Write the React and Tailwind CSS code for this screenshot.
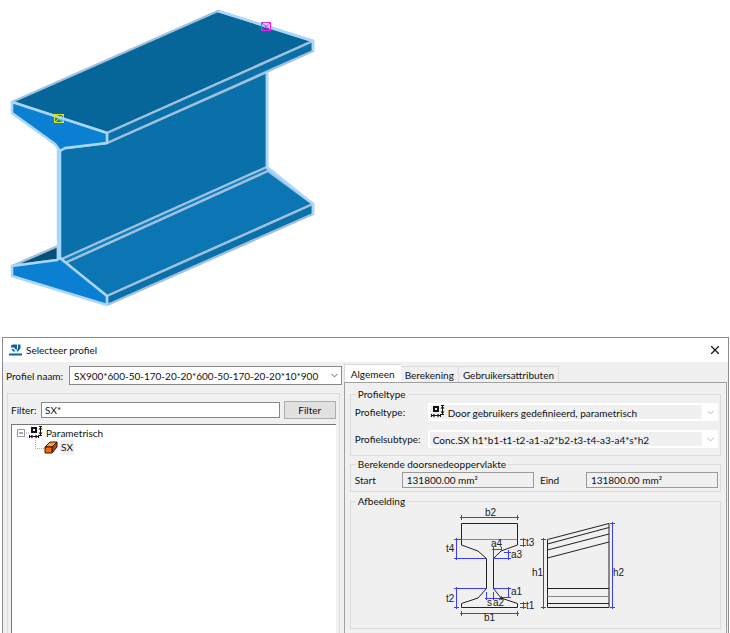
import { useState } from "react";
import { ChevronDown, X } from "lucide-react";

const tabs = ["Algemeen", "Berekening", "Gebruikersattributen"];

const BeamView = () => (
  <svg className="block shrink-0" width="330" height="337" viewBox="0 0 330 337" strokeLinejoin="round">
    <g stroke="#a0c0dc" strokeWidth="2.4">
      <path d="M12 266L58 246V260Z" fill="#07507a" />
      <path d="M59 149L107 143L267 72V167L62 259H59Z" fill="#0a70aa" />
      <path d="M62 259L267 167L268 171L65 263Z" fill="#0b80c4" strokeWidth="2" />
      <path d="M65 263L268 171L313 204L107 296Z" fill="#0b76b3" />
      <path d="M107 296L313 204V214L107 305Z" fill="#0a70aa" />
      <path d="M12 102L218 11L313 41L107 133Z" fill="#066699" />
      <path d="M107 133L313 41V51L107 143Z" fill="#0a70aa" />
    </g>
    <g stroke="#a8d6fc" strokeWidth="2.6" fill="none">
      <path d="M218 11L313 41V51M267 72V167L313 204V214" />
      <path d="M12 102L107 133V143L65 148L60 151L55 144L12 113Z" fill="#0b80d2" />
      <path d="M12 266L57 260L60 258L107 296V305L12 276Z" fill="#0b80d2" />
      <path d="M59 149V259" strokeWidth="4.500" />
    </g>
    <path d="M54.500 114.500h9v8h-9zl9 8m0-8l-9 8" fill="none" stroke="#dbe81e" />
    <path d="M261.500 22.500h9v8h-9zl9 8m0-8l-9 8" fill="none" stroke="#f01ef0" />
  </svg>
);

const ParametricIcon = () => (
  <svg className="shrink-0" width="14" height="13" viewBox="0 0 14 13" fill="none" stroke="#111">
    <path d="M3 2h4v4H3z" strokeWidth="2" />
    <path d="M11.500 1v8M10 .5h3M10 9.500h3" />
    <path d="M1 10.500h8M.5 9v3M9.500 9v3" />
    <path d="M9.500 3.500h4l-2-2.500zM9.500 6.500h4l-2 2.500zM3.500 8.500v4L1 10.500zM6.500 8.500v4L9 10.500z" fill="#111" stroke="none" />
  </svg>
);

const ProfileDiagram = () => (
  <svg className="mx-auto block" width="190" height="118" viewBox="441 507 190 118" fill="none">
    <g stroke="#222">
      <path d="M461.500 523.500H517.500V545L501 551L493.500 558.500V588.500L501 598L517.500 603.500V607.500H461.500V603.500L478 598L486.500 588.500V558.500L478 551L461.500 545Z" />
      <path d="M547.500 539.500L609 523.500V607.500H547.500ZM547.500 544L609 527.500M547.500 550L609 534M547.500 558L609 542M547.500 588.500H609M547.500 603.500H609" />
      <path d="M461.500 539.500H517.500M547.500 596.500H609" stroke="#888" />
    </g>
    <g stroke="#3c3cff">
      <path d="M460 517.500H519M461.500 515V520M517.500 515V520" />
      <path d="M460 613.500H519M461.500 611V616M517.500 611V616" />
      <path d="M456.500 538V560M454 539.500H461M454 558.500H486" />
      <path d="M456.500 587V609M454 588.500H486M454 607.500H459" />
      <path d="M523.500 538V547M520 539.500H526M520 545.500H526" />
      <path d="M523.500 602V609M520 603.500H526M520 607.500H526" />
      <path d="M493.500 547V558M492 549.500H502M501.500 547V551" />
      <path d="M508.500 550V560M504 552.500H511M494 558.500H511" />
      <path d="M508.500 587V598M494 588.500H511M501 597.500H511" />
      <path d="M486.500 592V600M493.500 592V600M485 598.500H502M501.500 596V600" />
      <path d="M543.500 538V609M541 539.500H546M541 607.500H546" />
      <path d="M612.500 522V609M610 523.500H615M610 607.500H615" />
    </g>
    <g fill="#222" className="font-['Liberation_Sans',sans-serif] text-[10px]">
      <text x="485" y="516">b2</text>
      <text x="484" y="621">b1</text>
      <text x="446" y="552">t4</text>
      <text x="446" y="602">t2</text>
      <text x="526" y="546">t3</text>
      <text x="526" y="609">t1</text>
      <text x="491" y="547">a4</text>
      <text x="511" y="558">a3</text>
      <text x="511" y="595">a1</text>
      <text x="487" y="606">s</text>
      <text x="493" y="606">a2</text>
      <text x="532" y="576">h1</text>
      <text x="613" y="576">h2</text>
    </g>
  </svg>
);

const TypeSelect = ({ id, value, icon }) => (
  <div className="relative min-w-0 flex-1">
    <select
      id={id}
      className={`block h-[18px] w-full appearance-none border-2 border-r-[16px] border-white bg-[#f0f0f0] ${icon ? "pl-[18px]" : "pl-[3px]"}`}
    >
      <option>{value}</option>
    </select>
    {icon && <span className="pointer-events-none absolute top-[2px] left-[3px]">{icon}</span>}
    <ChevronDown className="pointer-events-none absolute top-[4px] right-[2px] text-[#b0b0b0]" size={11} strokeWidth={2} />
  </div>
);

const Group = ({ title, className, children }) => (
  <fieldset className={`min-w-0 border border-[#dcdcdc] pr-[2px] pl-1 ${className}`}>
    <legend className="ml-[1px] px-[2px] leading-3">{title}</legend>
    {children}
  </fieldset>
);

const App = () => {
  const [filter, setFilter] = useState("SX*");
  const [activeTab, setActiveTab] = useState("Algemeen");

  return (
    <div className="flex min-h-screen flex-col bg-white font-[Lato,'Noto_Sans',sans-serif] text-[10px] leading-4 whitespace-nowrap text-[#111]">
      <BeamView />
      <section className="mr-[1px] ml-[2px] flex flex-1 flex-col border border-b-0 border-[#8c8c8c] bg-[#f0f0f0]">
        <header className="flex h-6 items-center bg-white px-[6px]">
          <svg width="14" height="14" viewBox="0 0 14 14" fill="#0a63a5">
            <path d="M0 10.500h13v2H0zM2 2.500l2-1h4v5H6.500L5 4.500H2zM9 1.500h2.500v4L9 8.500H7.500L9 5z" />
            <path d="M2.500 6h2l2 2.500H4z" />
          </svg>
          <h1 className="ml-[3px] flex-1">Selecteer profiel</h1>
          <button aria-label="Sluiten">
            <X size={14} strokeWidth={2} />
          </button>
        </header>

        <div className="grid flex-1 grid-cols-[47fr_53fr]">
          <div className="flex min-w-0 flex-col pt-1 pr-[2px] pl-[3px]">
            <div className="flex items-center">
              <label htmlFor="name" className="w-[63px] shrink-0">Profiel naam:</label>
              <div className="relative flex-1">
                <select id="name" className="block h-[19px] w-full appearance-none border border-[#888] bg-white pl-1">
                  <option>SX900*600-50-170-20-20*600-50-170-20-20*10*900</option>
                </select>
                <ChevronDown className="pointer-events-none absolute top-[4px] right-[2px] text-[#555]" size={11} strokeWidth={2} />
              </div>
            </div>
            <div className="mt-2 mr-[2px] ml-[1px] flex flex-1 flex-col border border-b-0 border-[#dcdcdc] px-[3px] pt-[7px]">
              <div className="flex items-center gap-1">
                <label htmlFor="filter" className="w-[26px] shrink-0">Filter:</label>
                <input
                  id="filter"
                  className="h-4 min-w-0 flex-1 border border-[#888] bg-white px-[3px]"
                  value={filter}
                  onChange={(e) => setFilter(e.target.value)}
                />
                <button className="h-[18px] w-[52px] border border-[#adadad] bg-[#e1e1e1] leading-4">Filter</button>
              </div>
              <ul className="mt-[5px] flex-1 border-t border-l border-[#777] bg-white pl-[5px]">
                <li className="flex h-[15px] items-center">
                  <svg width="12" height="9" viewBox="0 0 12 9" fill="none">
                    <path d="M.5 1.500h7v7h-7z" stroke="#999" />
                    <path d="M2 5h4" stroke="#3355aa" />
                    <path d="M9 5h4" stroke="#aaa" strokeDasharray="1 1" />
                  </svg>
                  <ParametricIcon />
                  <span className="ml-[3px]">Parametrisch</span>
                </li>
                <li className="flex h-[15px] items-center pl-[18px]">
                  <svg width="9" height="15" viewBox="0 0 9 15" fill="none">
                    <path d="M.5 0v8.500H9" stroke="#aaa" strokeDasharray="1 1" />
                  </svg>
                  <svg width="14" height="13" viewBox="0 0 14 13" stroke="#331a00" strokeLinejoin="round">
                    <path d="M1 6L6 1H13L8 6Z" fill="#ff9a4d" />
                    <path d="M8 6L13 1V6L8 12Z" fill="#a84a10" />
                    <path d="M1 6H8V12H1Z" fill="#f56a0a" />
                  </svg>
                  <span className="ml-[2px] bg-[#f0f0f0] px-[1px] leading-[15px]">SX</span>
                </li>
              </ul>
            </div>
          </div>

          <div className="flex min-w-0 flex-col pt-[2px] pr-[1px]">
            <div role="tablist" className="flex h-[18px] items-end">
              {tabs.map((tab) => (
                <button
                  key={tab}
                  role="tab"
                  aria-selected={tab === activeTab}
                  onClick={() => setActiveTab(tab)}
                  className={
                    tab === activeTab
                      ? "h-[18px] border-t border-l border-[#d8d8d8] bg-white px-[6px] leading-4"
                      : "h-4 border-t border-r border-[#dcdcdc] px-1 leading-4"
                  }
                >
                  {tab}
                </button>
              ))}
            </div>
            <div className="flex-1 border border-b-0 border-[#a0a0a0] px-[5px] pt-[5px]">
              <Group title="Profieltype" className="pt-[3px] pb-[7px]">
                <div className="flex items-center">
                  <label htmlFor="type" className="w-[73px] shrink-0">Profieltype:</label>
                  <TypeSelect id="type" value="Door gebruikers gedefinieerd, parametrisch" icon={<ParametricIcon />} />
                </div>
                <div className="mt-[9px] flex items-center">
                  <label htmlFor="subtype" className="w-[73px] shrink-0">Profielsubtype:</label>
                  <TypeSelect id="subtype" value="Conc.SX h1*b1-t1-t2-a1-a2*b2-t3-t4-a3-a4*s*h2" />
                </div>
              </Group>
              <Group title="Berekende doorsnedeoppervlakte" className="mt-[2px] pt-[2px] pb-[3px]">
                <div className="flex items-center">
                  <label htmlFor="start" className="w-[47px] shrink-0">Start</label>
                  <input id="start" readOnly value="131800.00 mm²" className="h-4 min-w-0 flex-1 border border-[#999] px-1" />
                  <label htmlFor="end" className="w-[52px] shrink-0 pl-[6px]">Eind</label>
                  <input id="end" readOnly value="131800.00 mm²" className="h-4 min-w-0 flex-1 border border-[#999] px-1" />
                </div>
              </Group>
              <Group title="Afbeelding" className="mt-[3px] pb-[3px]">
                <ProfileDiagram />
              </Group>
            </div>
          </div>
        </div>
      </section>
    </div>
  );
};

export default App;
